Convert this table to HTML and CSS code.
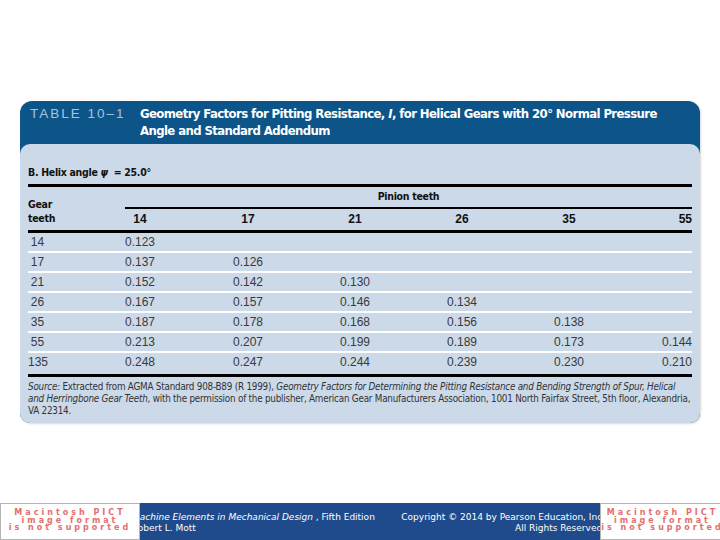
FILE: index.html
```html
<!DOCTYPE html>
<html>
<head>
<meta charset="utf-8">
<link rel="stylesheet" href="styles.css">
</head>
<body>
<div class="page">
  <div class="card">
    <div class="card-head">
      <span class="tag">TABLE 10–1</span>
      <h1 class="title">Geometry Factors for Pitting Resistance, <i>I</i>, for Helical Gears with 20° Normal Pressure<br>Angle and Standard Addendum</h1>
    </div>
    <div class="card-body">
      <div class="helix">B. Helix angle <i>ψ</i> &nbsp;= 25.0°</div>
      <div class="rule"></div>
      <div class="thead">
        <div class="gear">Gear<br>teeth</div>
        <div class="pinion">Pinion teeth</div>
        <div class="hn">14</div>
        <div class="hn">17</div>
        <div class="hn">21</div>
        <div class="hn">26</div>
        <div class="hn">35</div>
        <div class="hn last">55</div>
      </div>
      <div class="rule"></div>
      <div class="rows">
        <div class="row"><span class="lbl">14</span><span>0.123</span><span></span><span></span><span></span><span></span><span></span></div>
        <div class="row"><span class="lbl">17</span><span>0.137</span><span>0.126</span><span></span><span></span><span></span><span></span></div>
        <div class="row"><span class="lbl">21</span><span>0.152</span><span>0.142</span><span>0.130</span><span></span><span></span><span></span></div>
        <div class="row"><span class="lbl">26</span><span>0.167</span><span>0.157</span><span>0.146</span><span>0.134</span><span></span><span></span></div>
        <div class="row"><span class="lbl">35</span><span>0.187</span><span>0.178</span><span>0.168</span><span>0.156</span><span>0.138</span><span></span></div>
        <div class="row"><span class="lbl">55</span><span>0.213</span><span>0.207</span><span>0.199</span><span>0.189</span><span>0.173</span><span class="last">0.144</span></div>
        <div class="row"><span class="lbl">135</span><span>0.248</span><span>0.247</span><span>0.244</span><span>0.239</span><span>0.230</span><span class="last">0.210</span></div>
      </div>
      <div class="rule bottom"></div>
      <p class="source"><i>Source:</i> Extracted from AGMA Standard 908-B89 (R 1999), <i>Geometry Factors for Determining the Pitting Resistance and Bending Strength of Spur, Helical</i><br><i>and Herringbone Gear Teeth</i>, with the permission of the publisher, American Gear Manufacturers Association, 1001 North Fairfax Street, 5th floor, Alexandria,<br>VA 22314.</p>
    </div>
  </div>

  <div class="footer">
    <div class="foot-left"><div class="foot-left-in"><i>Machine Elements in Mechanical Design</i> , Fifth Edition<br>Robert L. Mott</div></div>
    <div class="foot-right"><div class="foot-right-in">Copyright © 2014 by Pearson Education, Inc.<br>All Rights Reserved.</div></div>
    <div class="pict pict-left"><span>Macintosh PICT</span><span>image format</span><span>is not supported</span></div>
    <div class="pict pict-right"><span>Macintosh PICT</span><span>image format</span><span>is not supported</span></div>
  </div>
</div>
</body>
</html>
```

FILE: styles.css
```css
* { box-sizing: border-box; }
html, body { margin: 0; padding: 0; background: #ffffff; }
.page {
  width: 720px;
  height: 540px;
  display: flex;
  flex-direction: column;
  padding-top: 101px;
  position: relative;
  overflow: hidden;
}
.card {
  margin: 0 20px;
  background: #0d5489;
  border-radius: 12px 12px 10px 10px;
  box-shadow: 1px 1px 2px rgba(0,0,0,0.15);
}
.card-head {
  display: flex;
  align-items: flex-start;
  height: 43px;
  padding: 4px 0 0 10px;
}
.tag {
  width: 110px;
  flex: none;
  font-family: "Liberation Sans", Arial, sans-serif;
  font-size: 13.5px;
  letter-spacing: 2px;
  line-height: 17px;
  color: #a9c3dd;
}
.title {
  margin: 0;
  font-family: "DejaVu Sans Condensed", "Liberation Sans", sans-serif;
  font-weight: bold;
  font-size: 13px;
  letter-spacing: -0.6px;
  line-height: 17px;
  color: #ffffff;
  white-space: nowrap;
}
.card-body {
  background: #cbd9e8;
  border-radius: 10px;
  height: 279px;
  padding: 21px 8px 0 8px;
  font-family: "DejaVu Sans Condensed", "Liberation Sans", sans-serif;
  color: #222;
}
.helix {
  font-weight: bold;
  font-size: 10.5px;
  letter-spacing: -0.3px;
  line-height: 14px;
  margin-bottom: 5px;
  color: #111;
}
.rule { height: 3px; background: #000; }
.rule.bottom { margin-top: 3px; }
.thead {
  display: grid;
  grid-template-columns: 97px 108px 107px 107px 107px 107px 31px;
  grid-template-rows: auto auto;
  font-weight: bold;
  font-size: 10.5px;
  letter-spacing: -0.3px;
  line-height: 14px;
  color: #111;
}
.gear {
  grid-row: 1 / 3;
  grid-column: 1;
  align-self: end;
  padding-bottom: 5px;
}
.pinion {
  grid-row: 1;
  grid-column: 2 / 8;
  text-align: center;
  padding: 2px 0 4px 0;
  border-bottom: 2px solid #000;
}
.hn {
  grid-row: 2;
  width: 30px;
  text-align: center;
  padding: 3px 0 4px 0;
  font-family: "Liberation Sans", Arial, sans-serif;
  font-size: 12px;
  letter-spacing: 0;
}
.hn.last { justify-self: end; text-align: right; }
.rows { display: flex; flex-direction: column; }
.row {
  display: grid;
  grid-template-columns: 97px 108px 107px 107px 107px 107px 31px;
  height: 20px;
  border-top: 2px solid #ffffff;
  align-items: center;
  font-family: "Liberation Sans", Arial, sans-serif;
  font-size: 12px;
  color: #3a3a3a;
}
.row:first-child { height: 18px; border-top: 0; }
.row .lbl { width: 19px; text-align: center; }
.row .last { text-align: right; }
.source {
  margin: 4px 0 0 0;
  font-size: 9.8px;
  letter-spacing: -0.22px;
  line-height: 12px;
  color: #333;
  white-space: nowrap;
}
.footer {
  margin-top: auto;
  height: 37px;
  background: #1f4a8b;
  display: flex;
  justify-content: space-between;
  padding: 9px 120px 0 140px;
  font-family: "DejaVu Sans", Verdana, sans-serif;
  font-size: 9px;
  line-height: 11px;
  color: #ffffff;
  position: relative;
}
.foot-left { overflow: hidden; }
.foot-left-in { margin-left: -8px; white-space: nowrap; }
.foot-right { overflow: hidden; }
.foot-right-in { margin-right: -5px; text-align: right; white-space: nowrap; }
.pict {
  position: absolute;
  top: 0;
  height: 37px;
  background: #ffffff;
  border: 1px solid #b5b5b5;
  display: flex;
  flex-direction: column;
  align-items: center;
  overflow: hidden;
  padding-top: 5px;
  font-family: "DejaVu Sans", Verdana, sans-serif;
  font-weight: bold;
  font-size: 8px;
  line-height: 7.6px;
  letter-spacing: 3px;
  color: #e46e6e;
  white-space: nowrap;
}
.pict span { flex: none; }
.pict-left { left: 0; width: 140px; }
.pict-right { left: 600px; width: 125px; }
```
